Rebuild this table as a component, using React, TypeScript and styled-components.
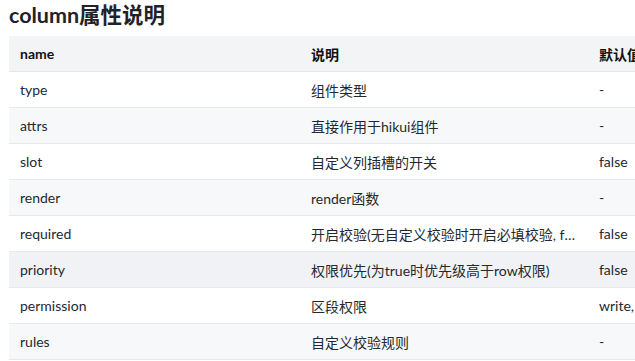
import React from "react";
import styled, { createGlobalStyle } from "styled-components";

const Global = createGlobalStyle`
  html, body { margin: 0; padding: 0; background: #fff; overflow: hidden; }
  body { font-family: Lato, "Noto Sans CJK SC", sans-serif; color: #24292f; }
`;

const Page = styled.div`
  padding: 0 0 0 9px;
  width: 626px;
  overflow: hidden;
`;

const Title = styled.h2`
  margin: 0 0 6px;
  height: 30px;
  font-size: 21.5px;
  line-height: 30px;
  font-weight: 700;
  color: #1f2328;
`;

const Table = styled.table`
  border-collapse: collapse;
  table-layout: fixed;
  width: 760px;
  font-size: 14px;
`;

const Th = styled.th<{ $w: number }>`
  width: ${(p) => p.$w - 22}px;
  height: 35px;
  padding: 0 11px;
  text-align: left;
  font-weight: 700;
  color: #111;
  background: #f3f4f6;
  border-bottom: 1px solid #e4e6e9;
  white-space: nowrap;
  overflow: hidden;
`;

const Row = styled.tr<{ $shade: "none" | "stripe" | "hover" }>`
  background: ${(p) =>
    p.$shade === "hover" ? "#f0f2f5" : p.$shade === "stripe" ? "#f7f8f9" : "#fff"};
`;

const Td = styled.td`
  height: 35px;
  padding: 0 11px;
  border-bottom: 1px solid #e8e9eb;
  color: #24292f;
  white-space: nowrap;
  overflow: hidden;
  text-overflow: ellipsis;
`;

const rows = [
  ["type", "组件类型", "-"],
  ["attrs", "直接作用于hikui组件", "-"],
  ["slot", "自定义列插槽的开关", "false"],
  ["render", "render函数", "-"],
  ["required", "开启校验(无自定义校验时开启必填校验, false时不校验)", "false"],
  ["priority", "权限优先(为true时优先级高于row权限)", "false"],
  ["permission", "区段权限", "write, read"],
  ["rules", "自定义校验规则", "-"],
];

export default function App() {
  return (
    <>
      <Global />
      <Page>
        <Title>column属性说明</Title>
        <Table>
          <thead>
            <tr>
              <Th $w={291}>name</Th>
              <Th $w={288}>说明</Th>
              <Th $w={181}>默认值</Th>
            </tr>
          </thead>
          <tbody>
            {rows.map((r, i) => (
              <Row
                key={r[0]}
                $shade={r[0] === "priority" ? "hover" : i % 2 === 1 ? "stripe" : "none"}
              >
                <Td>{r[0]}</Td>
                <Td>{r[1]}</Td>
                <Td>{r[2]}</Td>
              </Row>
            ))}
          </tbody>
        </Table>
      </Page>
    </>
  );
}
